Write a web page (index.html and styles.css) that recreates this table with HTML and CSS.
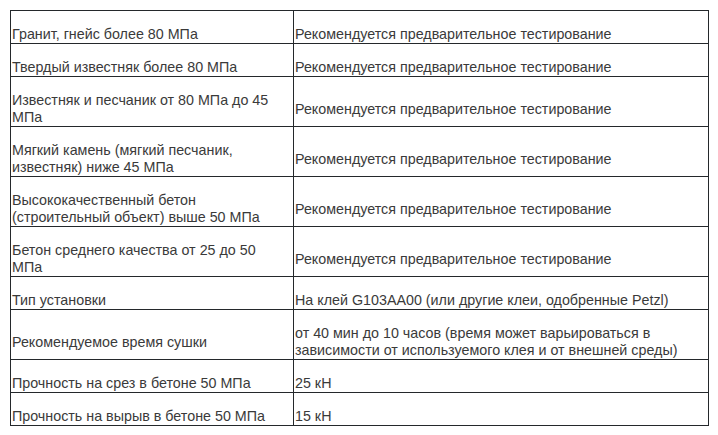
FILE: index.html
```html
<!DOCTYPE html>
<html lang="ru">
<head>
<meta charset="utf-8">
<title>Характеристики</title>
<link rel="stylesheet" href="styles.css">
</head>
<body>
<div class="page">
<table class="specs">
<colgroup><col class="c1"><col class="c2"></colgroup>
<tbody>
<tr><td>Гранит, гнейс более 80 МПа</td><td>Рекомендуется предварительное тестирование</td></tr>
<tr><td>Твердый известняк более 80 МПа</td><td>Рекомендуется предварительное тестирование</td></tr>
<tr><td>Известняк и песчаник от 80 МПа до 45 МПа</td><td>Рекомендуется предварительное тестирование</td></tr>
<tr><td>Мягкий камень (мягкий песчаник, известняк) ниже 45 МПа</td><td>Рекомендуется предварительное тестирование</td></tr>
<tr><td>Высококачественный бетон (строительный объект) выше 50 МПа</td><td>Рекомендуется предварительное тестирование</td></tr>
<tr><td>Бетон среднего качества от 25 до 50 МПа</td><td>Рекомендуется предварительное тестирование</td></tr>
<tr><td>Тип установки</td><td>На клей G103AA00 (или другие клеи, одобренные Petzl)</td></tr>
<tr><td>Рекомендуемое время сушки</td><td>от 40 мин до 10 часов (время может варьироваться в зависимости от используемого клея и от внешней среды)</td></tr>
<tr><td>Прочность на срез в бетоне 50 МПа</td><td>25 кН</td></tr>
<tr><td>Прочность на вырыв в бетоне 50 МПа</td><td>15 кН</td></tr>
</tbody>
</table>
</div>
</body>
</html>
```
FILE: styles.css
```css
html, body {
  margin: 0;
  padding: 0;
  background: #ffffff;
}
.page {
  padding: 10px 10px;
}
.specs {
  width: 699px;
  border-collapse: collapse;
  border: 1px solid #24282b;
  font-family: "Liberation Sans", Arial, sans-serif;
  font-size: 14.3px;
  line-height: 17px;
  color: #3a3a3a;
}
.specs .c1 { width: 283px; }
.specs td {
  border: 1px solid #24282b;
  padding: 15px 1px 0 1px;
  vertical-align: middle;
  text-align: left;
}
.specs td:first-child {
  padding-right: 6px;
}
```
